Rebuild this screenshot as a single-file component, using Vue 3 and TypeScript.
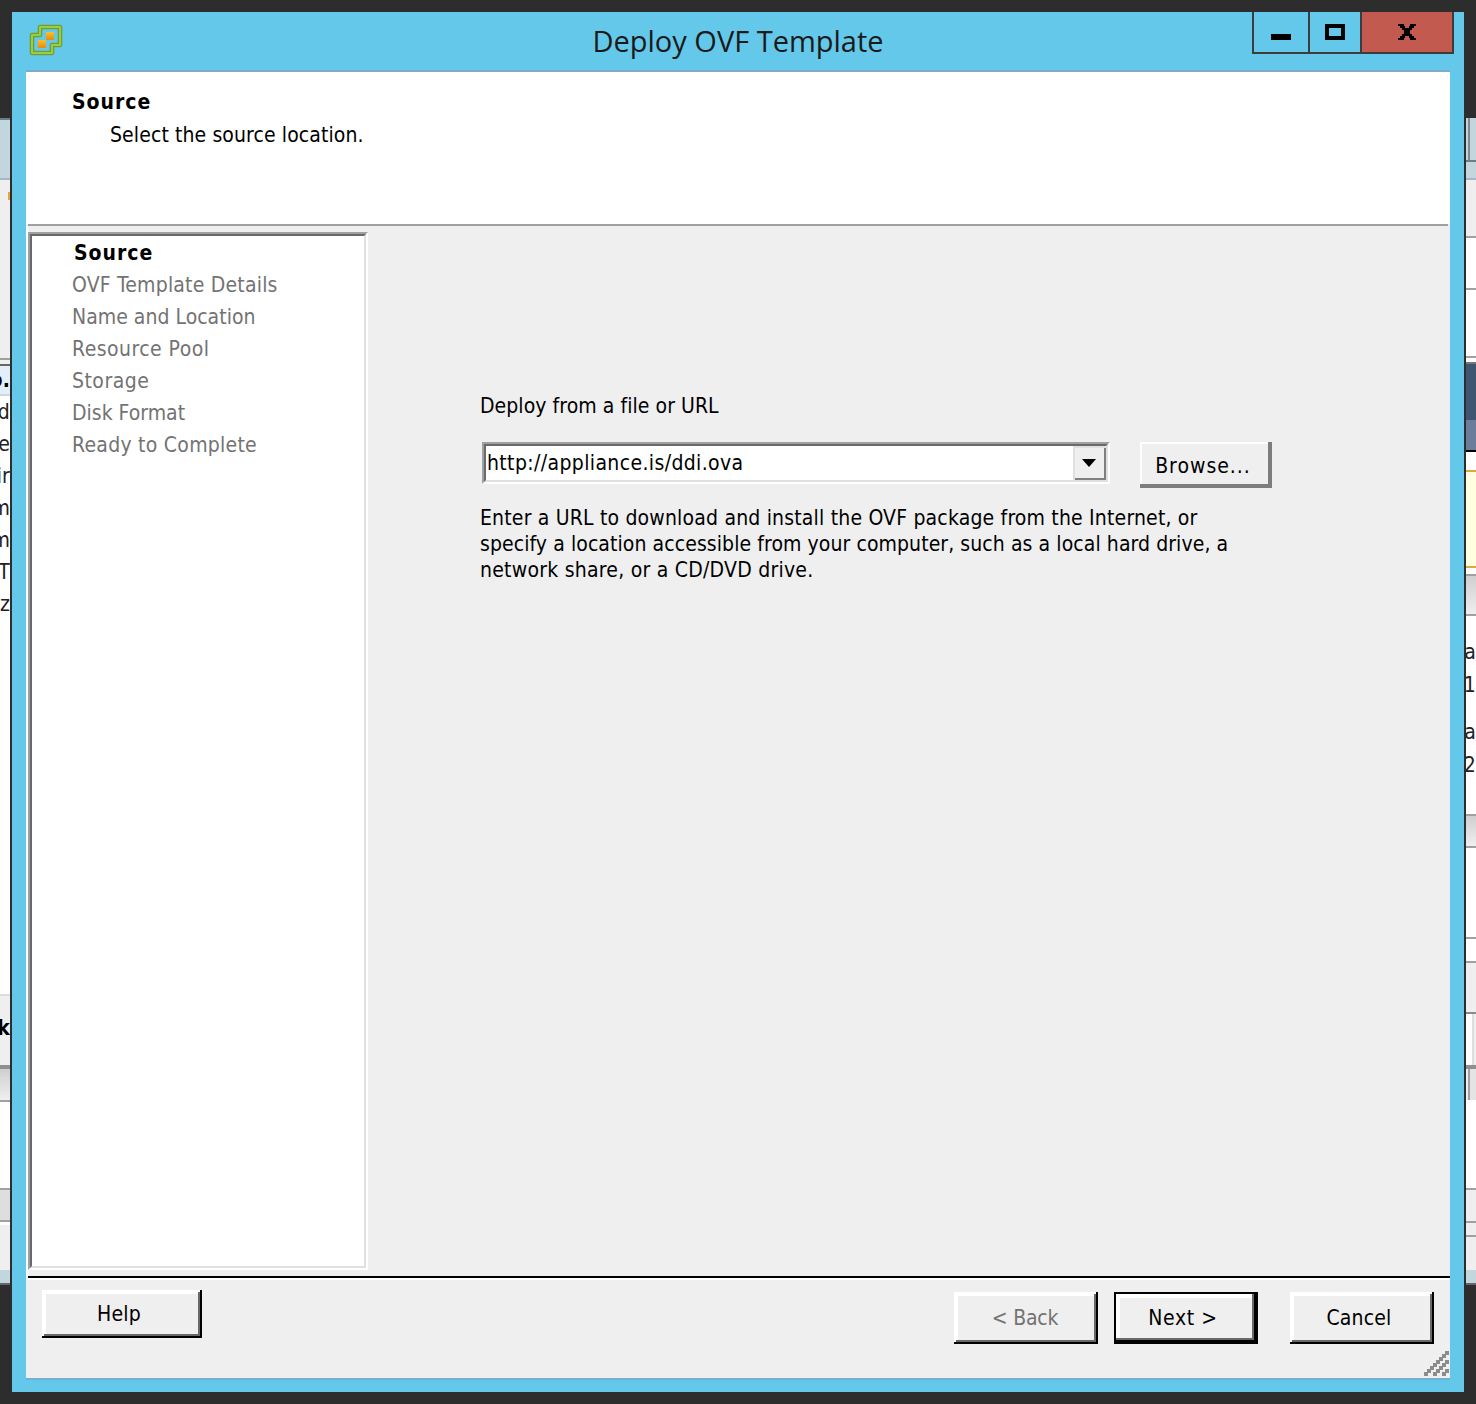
<script setup lang="ts">
type Band = { end: number; bg: string; text?: string; bold?: boolean }

const toBands = (start: number, list: Band[]) => {
  let y = start
  return list.map((b) => {
    const height = b.end - y
    y = b.end
    return { ...b, height }
  })
}

const G = '#a0a0a0'
const PALE = '#c3d6de'
const SOFT = '#efefef'
const SHADE = 'linear-gradient(#cfcfcf, #efefef)'

const leftBands = toBands(118, [
  { end: 120, bg: '#6d7d88' }, { end: 178, bg: PALE }, { end: 180, bg: '#a9b5c6' },
  { end: 192, bg: SOFT }, { end: 200, bg: 'linear-gradient(90deg, #efefef 80%, #e8a33a 80%)' },
  { end: 358, bg: SOFT }, { end: 360, bg: G }, { end: 364, bg: SOFT }, { end: 366, bg: '#666' },
  { end: 394, bg: '#e4eef8', text: 'o.', bold: true }, { end: 396, bg: '#c8d8ea' },
  { end: 428, bg: '#fff', text: 'd' }, { end: 460, bg: '#fff', text: 'e' }, { end: 492, bg: '#fff', text: 'ir' },
  { end: 524, bg: '#fff', text: 'm' }, { end: 556, bg: '#fff', text: 'm' }, { end: 588, bg: '#fff', text: 'T' },
  { end: 620, bg: '#fff', text: 'z' }, { end: 994, bg: '#fff' }, { end: 996, bg: '#ddd' },
  { end: 1012, bg: SOFT }, { end: 1044, bg: SOFT, text: 'k', bold: true }, { end: 1065, bg: SOFT },
  { end: 1069, bg: '#8f8f8f' }, { end: 1100, bg: SHADE }, { end: 1102, bg: G }, { end: 1188, bg: '#fff' },
  { end: 1190, bg: G }, { end: 1220, bg: '#dedede' }, { end: 1222, bg: G }, { end: 1225, bg: '#fff' },
  { end: 1270, bg: SOFT }, { end: 1283, bg: PALE }, { end: 1285, bg: '#666' },
])

const rightBands = toBands(118, [
  { end: 160, bg: 'linear-gradient(90deg, #c3d6de 20%, #7d8890 20%, #7d8890 40%, #c3d6de 40%)' },
  { end: 162, bg: '#6d7d88' }, { end: 178, bg: PALE }, { end: 180, bg: '#a9b5c6' }, { end: 236, bg: SOFT },
  { end: 238, bg: G }, { end: 288, bg: '#fff' }, { end: 290, bg: G }, { end: 356, bg: '#fff' },
  { end: 358, bg: G }, { end: 362, bg: '#fff' }, { end: 364, bg: '#777' }, { end: 420, bg: '#3e5670' },
  { end: 450, bg: '#6b7d9a' }, { end: 452, bg: '#000' }, { end: 470, bg: '#fff' }, { end: 472, bg: '#e0a83a' },
  { end: 566, bg: '#ffffe0' }, { end: 568, bg: '#e0a83a' }, { end: 574, bg: '#fff' }, { end: 576, bg: G },
  { end: 614, bg: SHADE }, { end: 616, bg: G }, { end: 636, bg: '#fff' },
  { end: 668, bg: '#fff', text: 'Ca' }, { end: 702, bg: '#fff', text: ': 1' }, { end: 716, bg: '#fff' },
  { end: 748, bg: '#fff', text: 'Ca' }, { end: 782, bg: '#fff', text: '52' }, { end: 814, bg: '#fff' },
  { end: 816, bg: G }, { end: 846, bg: SHADE }, { end: 848, bg: G }, { end: 937, bg: '#fff' }, { end: 939, bg: G },
  { end: 961, bg: '#fff' }, { end: 963, bg: G }, { end: 1012, bg: SOFT }, { end: 1014, bg: '#8a8a8a' },
  { end: 1065, bg: 'linear-gradient(90deg, #fff 60%, #ddd 60%, #ddd 80%, #efefef 80%)' }, { end: 1069, bg: '#8f8f8f' },
  { end: 1100, bg: 'linear-gradient(90deg, #efefef 20%, #a0a0a0 20%, #a0a0a0 40%, #e4e4e4 40%)' }, { end: 1188, bg: '#fff' },
  { end: 1190, bg: G }, { end: 1221, bg: SOFT }, { end: 1223, bg: G }, { end: 1235, bg: SOFT }, { end: 1237, bg: G },
  { end: 1270, bg: SOFT }, { end: 1283, bg: PALE }, { end: 1285, bg: '#666' },
])

const steps = [
  { label: 'OVF Template Details', track: 0.2 },
  { label: 'Name and Location', track: 0.02 },
  { label: 'Resource Pool', track: 0.45 },
  { label: 'Storage', track: 0.48 },
  { label: 'Disk Format', track: 0 },
  { label: 'Ready to Complete', track: 0.26 },
]

const hintLines = [
  { text: 'Enter a URL to download and install the OVF package from the Internet, or', track: 0.18 },
  { text: 'specify a location accessible from your computer, such as a local hard drive, a', track: 0.08 },
  { text: 'network share, or a CD/DVD drive.', track: 0.24 },
]

const gripSquares: { x: number; y: number }[] = []
for (const start of [0, 9, 18]) {
  for (let i = 0; start + i * 3 + 4 <= 26; i++) {
    gripSquares.push({ x: start + i * 3, y: 22 - i * 3 })
  }
}
</script>

<template>
  <div class="page">
    <div class="strip">
      <div
        v-for="(b, i) in leftBands"
        :key="i"
        class="band"
        :class="{ bold: b.bold }"
        :style="{ height: b.height + 'px', background: b.bg }"
      >{{ b.text }}</div>
    </div>

    <div class="window">
      <header class="titlebar">
        <svg class="logo" width="36" height="36" viewBox="28 22 36 36" aria-hidden="true">
          <defs>
            <linearGradient id="gold" x1="0" y1="0" x2="0" y2="1">
              <stop offset="0" stop-color="#fbc02d" />
              <stop offset="1" stop-color="#e88a0c" />
            </linearGradient>
          </defs>
          <path
            d="M40 27H60V45H52V53H32V35H40Z"
            fill="none"
            stroke="#6f9f2c"
            stroke-width="4.6"
            stroke-linejoin="round"
          />
          <path
            d="M40 27H60V45H52V53H32V35H40Z"
            fill="none"
            stroke="#9ccb45"
            stroke-width="2"
            stroke-linejoin="round"
          />
          <rect x="46" y="32" width="8" height="8" fill="url(#gold)" />
          <rect x="38" y="40" width="8" height="8" fill="url(#gold)" />
        </svg>
        <h1 class="title">Deploy OVF Template</h1>
        <div class="controls">
          <div class="ctl ctl-min"><span class="min-icon"></span></div>
          <div class="ctl ctl-max"><span class="max-icon"></span></div>
          <div class="ctl ctl-close">
            <svg width="18" height="16" viewBox="0 0 18 16" aria-hidden="true">
              <path
                d="M0 0H6V2H7V4H11V2H12V0H18V2H16V4H14V6H12V10H14V12H16V14H18V16H12V14H11V12H7V14H6V16H0V14H2V12H4V10H6V6H4V4H2V2H0Z"
                fill="#000"
              />
            </svg>
          </div>
        </div>
      </header>

      <div class="client">
        <section class="banner">
          <div class="banner-title">Source</div>
          <div class="banner-sub">Select the source location.</div>
        </section>
        <div class="rule"></div>

        <div class="body">
          <nav class="sunken steps-box">
            <div class="sunken-inner steps">
              <div class="step current">Source</div>
              <div
                v-for="s in steps"
                :key="s.label"
                class="step"
                :style="{ letterSpacing: s.track + 'px' }"
              >{{ s.label }}</div>
            </div>
          </nav>

          <main class="pane">
            <div class="field-label">Deploy from a file or URL</div>
            <div class="field-row">
              <div class="sunken combo">
                <div class="sunken-inner combo-inner">
                  <span class="combo-value">http://appliance.is/ddi.ova</span>
                  <span class="combo-btn"><i class="arrow"></i></span>
                </div>
              </div>
              <button class="btn browse" type="button">Browse...</button>
            </div>
            <p class="hint">
              <span
                v-for="l in hintLines"
                :key="l.text"
                class="hint-line"
                :style="{ letterSpacing: l.track + 'px' }"
              >{{ l.text }}</span>
            </p>
          </main>
        </div>

        <footer class="footer">
          <button class="btn help" type="button">Help</button>
          <div class="nav-btns">
            <button class="btn wide back" type="button">&lt; Back</button>
            <button class="btn wide next" type="button">Next &gt;</button>
            <button class="btn wide cancel" type="button">Cancel</button>
          </div>
          <svg class="grip" width="26" height="26" viewBox="0 0 26 26" aria-hidden="true">
            <rect
              v-for="(q, i) in gripSquares"
              :key="i"
              :x="q.x"
              :y="q.y"
              width="4"
              height="4"
              fill="#8c8c8c"
            />
          </svg>
        </footer>
      </div>
    </div>

    <div class="strip">
      <div
        v-for="(b, i) in rightBands"
        :key="i"
        class="band"
        :style="{ height: b.height + 'px', background: b.bg }"
      >{{ b.text }}</div>
    </div>
  </div>
</template>

<style scoped>
.page {
  display: flex;
  width: 1476px;
  height: 1404px;
  background: #2d2d2d;
  font-family: "DejaVu Sans", "Liberation Sans", sans-serif;
  font-stretch: condensed;
  font-size: 21px;
  letter-spacing: 0.18px;
  color: #000;
  overflow: hidden;
}
.strip {
  width: 10px;
  flex: none;
  padding-top: 118px;
  overflow: hidden;
}
.band {
  display: flex;
  align-items: center;
  justify-content: flex-end;
  white-space: nowrap;
  overflow: hidden;
  line-height: 1;
  color: #222;
}
.bold {
  font-weight: 700;
  color: #000;
}
.window {
  width: 1452px;
  height: 1380px;
  margin: 12px 2px 0;
  background: #64c8ea;
  display: flex;
  flex-direction: column;
}
.titlebar {
  height: 58px;
  flex: none;
  display: grid;
  grid-template-columns: 1fr auto 1fr;
  align-items: start;
  padding-right: 10px;
}
.logo {
  margin: 10px 0 0 16px;
}
.title {
  margin: 8px 0 0;
  font-family: "Open Sans", "Noto Sans", sans-serif;
  font-stretch: normal;
  font-weight: 400;
  font-size: 29px;
  letter-spacing: 0;
  line-height: 42px;
  color: #1a1a1a;
  transform: translateX(5px);
}
.controls {
  justify-self: end;
  display: flex;
  height: 40px;
  border: 2px solid #3c3c3c;
  border-top: 0;
}
.ctl {
  display: flex;
  justify-content: center;
  height: 40px;
}
.ctl-min {
  width: 54px;
  border-right: 2px solid #3c3c3c;
}
.ctl-max {
  width: 50px;
  border-right: 2px solid #3c3c3c;
}
.ctl-close {
  width: 90px;
  background: #c25a50;
  padding-top: 12px;
  box-sizing: border-box;
}
.ctl-close svg {
  margin-left: -1px;
}
.min-icon {
  width: 20px;
  height: 6px;
  margin-top: 22px;
  background: #000;
}
.max-icon {
  box-sizing: border-box;
  width: 20px;
  height: 16px;
  margin-top: 12px;
  border: 4px solid #000;
}
.client {
  flex: none;
  height: 1306px;
  margin: 0 14px;
  border-top: 2px solid #7fa9c6;
  border-bottom: 2px solid #6fb0d4;
  background: #efefef;
  display: flex;
  flex-direction: column;
}
.banner {
  height: 152px;
  flex: none;
  box-sizing: border-box;
  background: #fff;
  padding: 17px 0 0 46px;
}
.banner-title {
  font-weight: 700;
  letter-spacing: 1px;
  line-height: 26px;
}
.banner-sub {
  margin-left: 38px;
  margin-top: 7px;
  line-height: 26px;
  letter-spacing: 0.1px;
}
.rule {
  height: 2px;
  flex: none;
  margin: 0 2px;
  background: #a0a0a0;
}
.body {
  flex: 1;
  display: flex;
  border-left: 2px solid #fff;
  padding-top: 6px;
  padding-bottom: 6px;
  min-height: 0;
}
.sunken {
  box-sizing: border-box;
  border-style: solid;
  border-width: 2px;
  border-color: #a0a0a0 #fff #fff #a0a0a0;
}
.sunken-inner {
  box-sizing: border-box;
  height: 100%;
  background: #fff;
  border-style: solid;
  border-width: 2px;
  border-color: #696969 #e0e0e0 #e0e0e0 #696969;
}
.steps-box {
  width: 340px;
  flex: none;
}
.steps {
  padding-top: 1px;
  padding-left: 40px;
}
.step {
  height: 32px;
  line-height: 32px;
  color: #737373;
}
.step.current {
  color: #000;
  font-weight: 700;
  letter-spacing: 1px;
  margin-left: 2px;
}
.pane {
  flex: 1;
  padding: 161px 0 0 112px;
}
.field-label {
  line-height: 26px;
  letter-spacing: 0.06px;
}
.field-row {
  display: flex;
  align-items: flex-start;
  margin: 23px 0 0 2px;
  gap: 30px;
}
.combo {
  width: 628px;
  height: 42px;
}
.combo-inner {
  display: flex;
  align-items: stretch;
}
.combo-value {
  flex: 1;
  line-height: 34px;
  padding-left: 1px;
  letter-spacing: 0.37px;
}
.combo-btn {
  width: 33px;
  flex: none;
  display: flex;
  align-items: center;
  justify-content: center;
  background: #efefef;
  box-shadow: inset 2px 2px 0 #e0e0e0, inset -2px -2px 0 #808080;
}
.arrow {
  width: 0;
  height: 0;
  margin-right: 2px;
  border-style: solid;
  border-width: 8px 7px 0;
  border-color: #000 transparent transparent;
}
.hint {
  margin: 17px 0 0;
  line-height: 26px;
}
.hint-line {
  display: block;
  white-space: nowrap;
}
.btn {
  display: block;
  padding: 0;
  border: 0;
  background: #efefef;
  font: inherit;
  letter-spacing: inherit;
  color: #000;
  box-shadow:
    inset -2px -2px 0 #000,
    inset 2px 2px 0 #fff,
    inset -4px -4px 0 #696969,
    inset 4px 4px 0 #fff;
}
.browse {
  width: 132px;
  height: 46px;
  padding: 2px 6px 0 0;
  letter-spacing: 1px;
  box-shadow: inset -4px -4px 0 #7d7d7d, inset 2px 2px 0 #fff;
}
.footer {
  position: relative;
  flex: none;
  height: 102px;
  box-sizing: border-box;
  border-top: 2px solid #000;
  margin-left: 2px;
  padding: 12px 16px 0 14px;
  display: flex;
  align-items: flex-start;
  box-shadow: inset 0 2px 0 #fff;
}
.help {
  width: 160px;
  height: 48px;
  padding-right: 6px;
}
.nav-btns {
  margin: 2px 0 0 auto;
  display: flex;
  gap: 16px;
}
.wide {
  width: 144px;
  height: 52px;
}
.back {
  color: #737373;
  letter-spacing: -0.2px;
  padding-right: 2px;
}
.next {
  padding-right: 6px;
  letter-spacing: 0.6px;
  box-shadow:
    inset 0 0 0 2px #000,
    inset -4px -4px 0 #000,
    inset -6px -6px 0 #696969,
    inset 6px 6px 0 #fff;
}
.cancel {
  margin-left: 16px;
  padding-right: 6px;
}
.grip {
  position: absolute;
  right: 0;
  bottom: 2px;
}
</style>

<style>
html,
body {
  margin: 0;
  background: #2d2d2d;
}
</style>
